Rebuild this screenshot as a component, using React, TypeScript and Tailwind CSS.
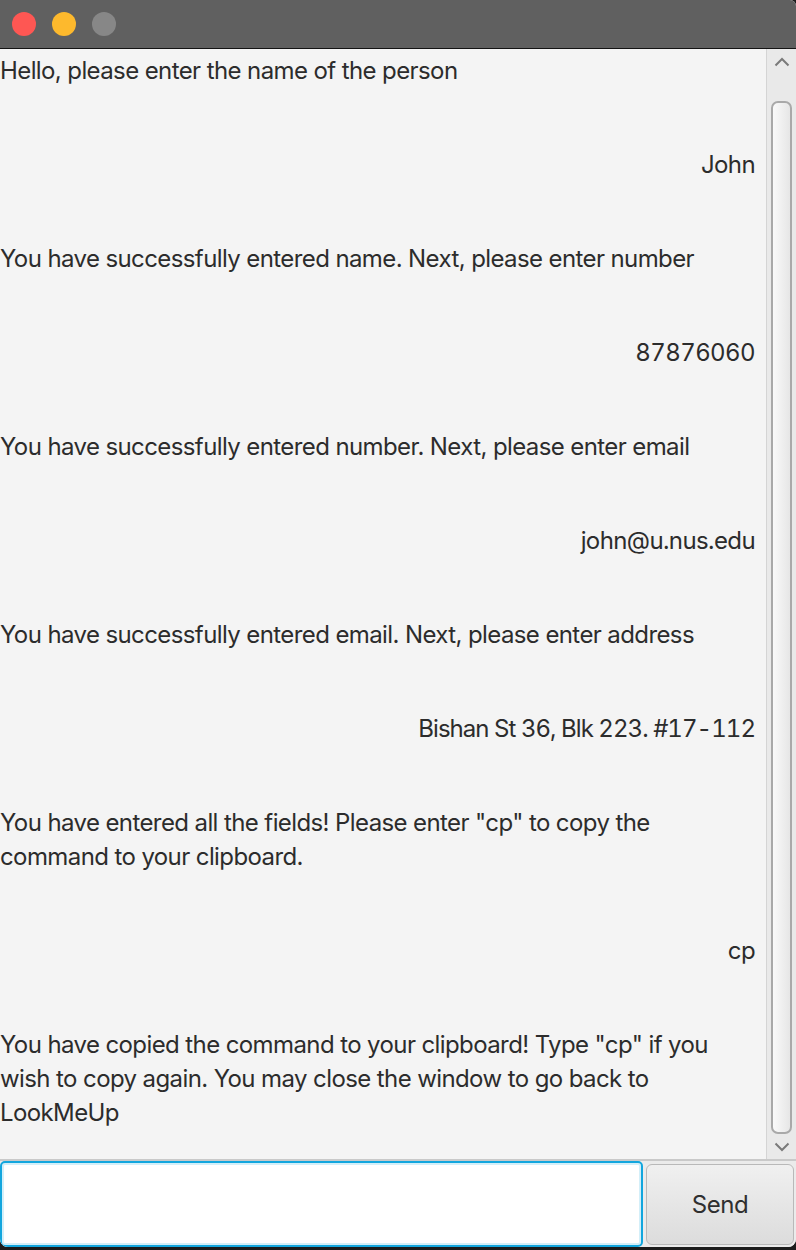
import React from "react";

const msgs: { text: React.ReactNode; right?: boolean; tight?: boolean }[] = [
  { text: "Hello, please enter the name of the person" },
  { text: "John", right: true },
  { text: "You have successfully entered name. Next, please enter number" },
  { text: "87876060", right: true },
  { text: "You have successfully entered number. Next, please enter email" },
  { text: "john@u.nus.edu", right: true },
  { text: "You have successfully entered email. Next, please enter address" },
  { text: "Bishan St 36, Blk 223. #17-112", right: true, tight: true },
  {
    text: (
      <>
        You have entered all the fields! Please enter "cp" to copy the
        <br />
        command to your clipboard.
      </>
    ),
  },
  { text: "cp", right: true },
  {
    text: (
      <>
        You have copied the command to your clipboard! Type "cp" if you
        <br />
        wish to copy again. You may close the window to go back to
        <br />
        LookMeUp
      </>
    ),
  },
];

export default function App() {
  return (
    <div
      className="w-[796px] h-[1250px] bg-[#1c1c1c] overflow-hidden"
      style={{ fontFamily: "Inter, 'Noto Sans', sans-serif" }}
    >
      <div className="w-[796px] h-[1247px] flex flex-col bg-[#f4f4f4] rounded-b-[8px] rounded-tr-[6px] overflow-hidden">
        {/* title bar */}
        <div className="h-[48px] bg-[#606060] flex items-center gap-[16px] pl-[12px] shrink-0">
          <div className="w-[24px] h-[24px] rounded-full bg-[#fe5753]" />
          <div className="w-[24px] h-[24px] rounded-full bg-[#fdb92d]" />
          <div className="w-[24px] h-[24px] rounded-full bg-[#878787]" />
        </div>
        <div className="h-px bg-[#141414] shrink-0" />
        {/* main */}
        <div className="flex h-[1110px] shrink-0">
          <div className="flex-1 bg-[#f4f4f4] pt-[5px] pr-[11px] flex flex-col gap-[60px] text-[24px] leading-[34px] text-[#2c2c2c] tracking-[-0.025em]">
            {msgs.map((m, i) => (
              <div
                key={i}
                className={
                  m.right
                    ? m.tight
                      ? "text-right tabular-nums tracking-[-0.04em]"
                      : "text-right tabular-nums"
                    : "text-left"
                }
              >
                {m.text}
              </div>
            ))}
          </div>
          {/* scrollbar */}
          <div className="w-[30px] bg-[#e9e9e9] border-l border-[#d4d4d4] flex flex-col items-center">
            <div className="h-[48px] flex items-start justify-center pt-[8px]">
              <svg width="16" height="10" viewBox="0 0 16 10">
                <path d="M1.5 8.5 L8 2 L14.5 8.5" fill="none" stroke="#7a7a7a" strokeWidth="2" />
              </svg>
            </div>
            <div className="w-[21px] h-[1033px] mt-[4px] ml-[-1px] rounded-[7px] border-2 border-[#a9a9a9] bg-gradient-to-r from-[#fafafa] to-[#e6e6e6]" />
            <div className="flex-1 flex items-center justify-center">
              <svg width="16" height="10" viewBox="0 0 16 10">
                <path d="M1.5 1.5 L8 8 L14.5 1.5" fill="none" stroke="#7a7a7a" strokeWidth="2" />
              </svg>
            </div>
          </div>
        </div>
        <div className="h-[2px] bg-[#c9c9c9] shrink-0" />
        {/* bottom */}
        <div className="h-[86px] flex gap-[3px] bg-[#ebebeb] shrink-0">
          <div className="w-[643px] h-full bg-white rounded-[5px] border-2 border-[#12a6de] shadow-[inset_0_0_0_2px_#d3eff9]" />
          <div className="flex-1 mt-[3px] mb-[2px] mr-[2px] rounded-[6px] border border-[#b9b9b9] bg-gradient-to-b from-[#f0f0f0] to-[#dcdcdc] flex items-center justify-center text-[24px] text-[#2f2f2f] tracking-[-0.02em]">
            Send
          </div>
        </div>
      </div>
    </div>
  );
}
